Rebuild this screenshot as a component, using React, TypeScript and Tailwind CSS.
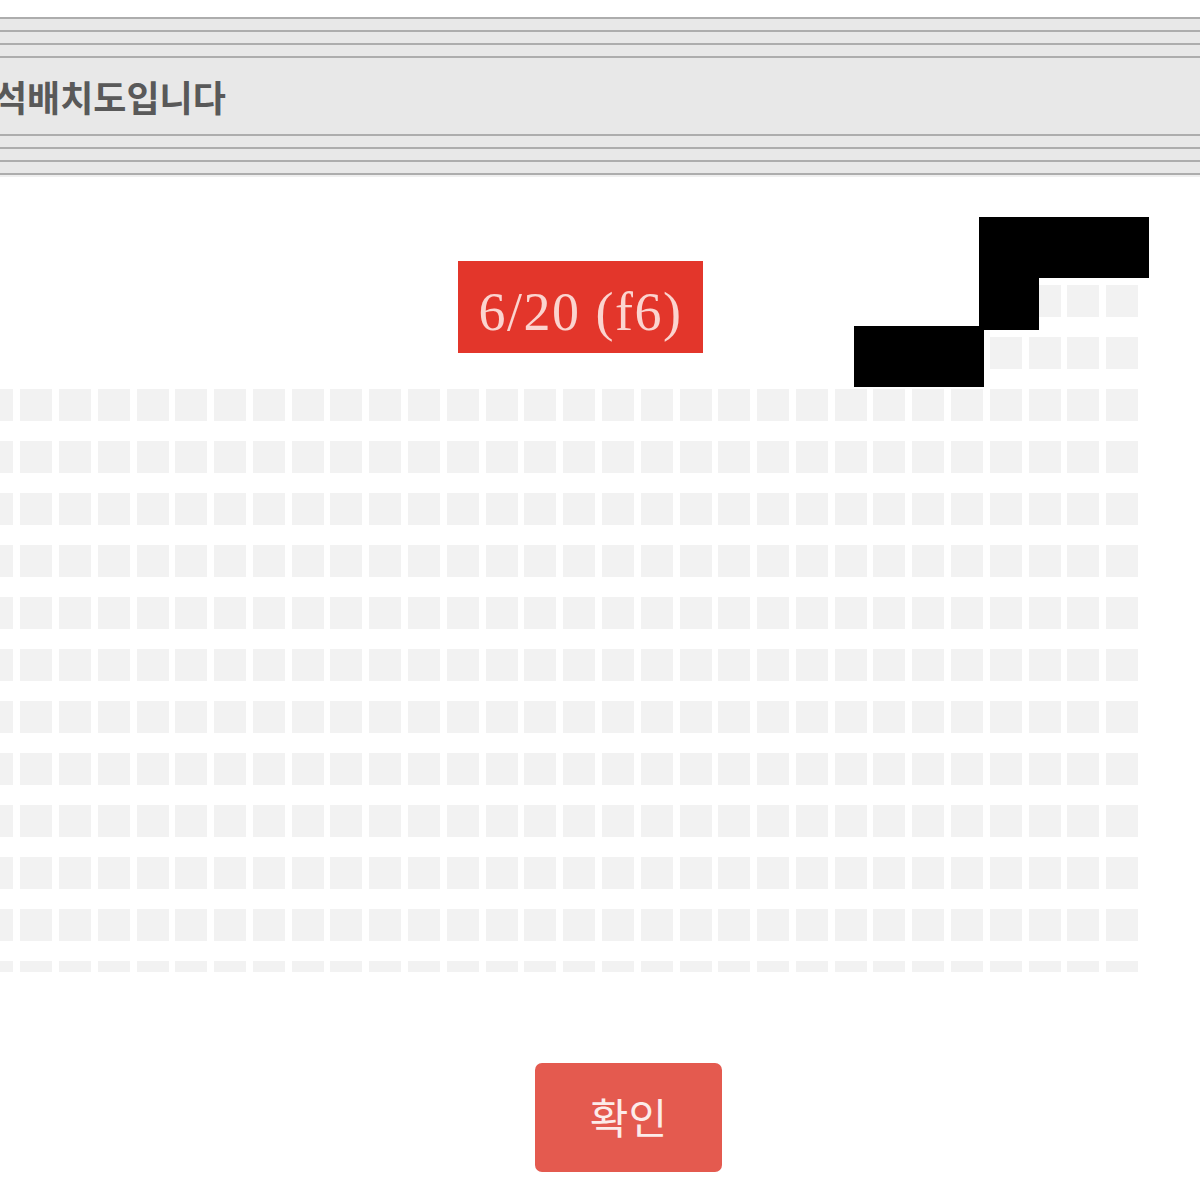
import React from 'react';

const COLS = 30;
const FULL_ROWS = 12;

const Seat: React.FC = () => <div className="h-[32px] w-[32px] shrink-0 bg-[#f2f2f2]" />;

const SeatRow: React.FC<{ count: number }> = ({ count }) => (
  <div className="flex justify-end gap-x-[6.79px]">
    {Array.from({ length: count }).map((_, i) => (
      <Seat key={i} />
    ))}
  </div>
);

const Header: React.FC = () => (
  <div className="mt-[17px] bg-[#e8e8e8]">
    <div className="h-[13px] border-t-2 border-[#adadad]" />
    <div className="h-[13px] border-t-2 border-[#adadad]" />
    <div className="h-[13px] border-t-2 border-[#adadad]" />
    <div className="flex h-[78px] items-center border-t-2 border-[#adadad]">
      <span
        className="ml-[-6px] text-[36px] font-bold text-[#595959]"
        style={{ fontFamily: '"Noto Sans CJK KR", "Noto Sans", sans-serif' }}
      >
        석배치도입니다
      </span>
    </div>
    <div className="h-[13px] border-t-2 border-[#adadad]" />
    <div className="h-[13px] border-t-2 border-[#adadad]" />
    <div className="h-[13px] border-t-2 border-[#adadad]" />
    <div className="h-[4px] border-t-2 border-[#adadad] bg-[#efefef]" />
  </div>
);

const App: React.FC = () => {
  return (
    <div className="relative h-[1200px] w-[1200px] overflow-hidden bg-white">
      <Header />

      {/* seat map */}
      <div className="ml-[-18.8px] mt-[84px] w-[1156.9px]">
        <div className="flex items-start justify-between">
          <div className="ml-[476.8px] flex h-[92px] w-[245px] items-center justify-center bg-[#e3362b] pt-[10px]">
            <span
              className="text-[54px] leading-none tracking-[1.5px] text-[#fbd4cf]"
              style={{ fontFamily: '"Liberation Serif", "Noto Sans CJK KR", serif' }}
            >
              6/20 (f6)
            </span>
          </div>
          <div className="flex flex-col items-end gap-y-[20px] pt-[24px]">
            <SeatRow count={4} />
            <SeatRow count={7} />
          </div>
        </div>
        <div className="mt-[20px] flex h-[583px] flex-col gap-y-[20px] overflow-hidden">
          {Array.from({ length: FULL_ROWS }).map((_, r) => (
            <SeatRow key={r} count={COLS} />
          ))}
        </div>
      </div>

      <div className="mt-[91px] pl-[535px]">
        <button
          className="flex h-[109px] w-[187px] items-center justify-center rounded-[7px] bg-[#e45a4f] pb-[4px] text-[42px] text-[#fcecea]"
          style={{ fontFamily: '"Noto Sans CJK KR", "Noto Sans", sans-serif' }}
        >
          확인
        </button>
      </div>

      {/* redaction blocks */}
      <div className="absolute left-[979px] top-[217px] h-[61px] w-[170px] bg-black" />
      <div className="absolute left-[979px] top-[217px] h-[113px] w-[60px] bg-black" />
      <div className="absolute left-[854px] top-[326px] h-[61px] w-[130px] bg-black" />
    </div>
  );
};

export default App;
